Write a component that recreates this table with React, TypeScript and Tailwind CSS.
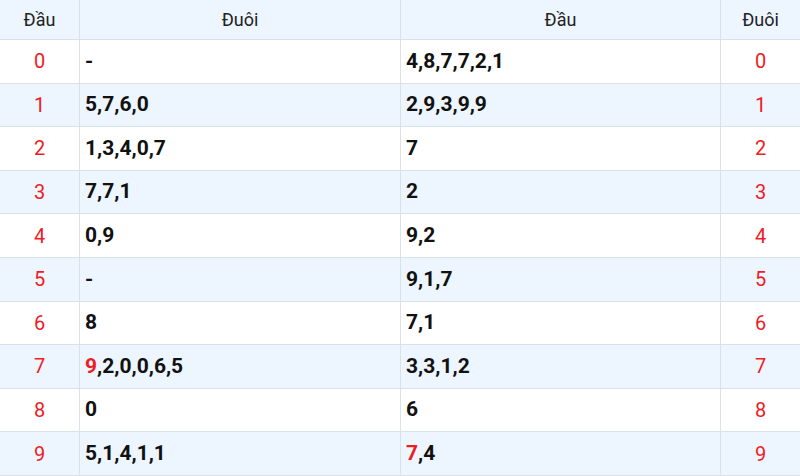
import React from "react";

type Part = { t: string; red?: boolean };
const rows: { d: Part[]; h: Part[] }[] = [
  { d: [{ t: "-" }], h: [{ t: "4,8,7,7,2,1" }] },
  { d: [{ t: "5,7,6,0" }], h: [{ t: "2,9,3,9,9" }] },
  { d: [{ t: "1,3,4,0,7" }], h: [{ t: "7" }] },
  { d: [{ t: "7,7,1" }], h: [{ t: "2" }] },
  { d: [{ t: "0,9" }], h: [{ t: "9,2" }] },
  { d: [{ t: "-" }], h: [{ t: "9,1,7" }] },
  { d: [{ t: "8" }], h: [{ t: "7,1" }] },
  { d: [{ t: "9", red: true }, { t: ",2,0,0,6,5" }], h: [{ t: "3,3,1,2" }] },
  { d: [{ t: "0" }], h: [{ t: "6" }] },
  { d: [{ t: "5,1,4,1,1" }], h: [{ t: "7", red: true }, { t: ",4" }] },
];

function Parts({ p }: { p: Part[] }) {
  return (
    <>
      {p.map((x, i) => (
        <span key={i} className={x.red ? "text-[#ee1c25]" : ""}>
          {x.t}
        </span>
      ))}
    </>
  );
}

export default function App() {
  return (
    <div
      className="w-[800px] h-[476px] overflow-hidden bg-white"
      style={{ fontFamily: "Roboto, 'Liberation Sans', sans-serif" }}
    >
      <div className="grid grid-cols-[80px_321px_320px_79px] grid-rows-[40px_repeat(10,43.6px)] h-[476px]">
        {["Đầu", "Đuôi", "Đầu", "Đuôi"].map((h, i) => (
          <div
            key={i}
            className={`bg-[#edf5fe] border-b border-[#dbe1e8] flex items-center justify-center text-[18px] text-[#222] ${
              i < 3 ? "border-r" : ""
            }`}
          >
            {h}
          </div>
        ))}
        {rows.map((r, i) => {
          const bg = i % 2 === 1 ? "bg-[#edf5fe]" : "bg-white";
          return (
            <React.Fragment key={i}>
              <div
                className={`${bg} border-b border-r border-[#dbe1e8] flex items-center justify-center text-[20px] text-[#ee1c25]`}
              >
                {i}
              </div>
              <div
                className={`${bg} border-b border-r border-[#dbe1e8] flex items-center pl-[5px] text-[21px] font-bold text-[#111]`}
              >
                <Parts p={r.d} />
              </div>
              <div
                className={`${bg} border-b border-r border-[#dbe1e8] flex items-center pl-[5px] text-[21px] font-bold text-[#111]`}
              >
                <Parts p={r.h} />
              </div>
              <div
                className={`${bg} border-b border-[#dbe1e8] flex items-center justify-center text-[20px] text-[#ee1c25]`}
              >
                {i}
              </div>
            </React.Fragment>
          );
        })}
      </div>
    </div>
  );
}
